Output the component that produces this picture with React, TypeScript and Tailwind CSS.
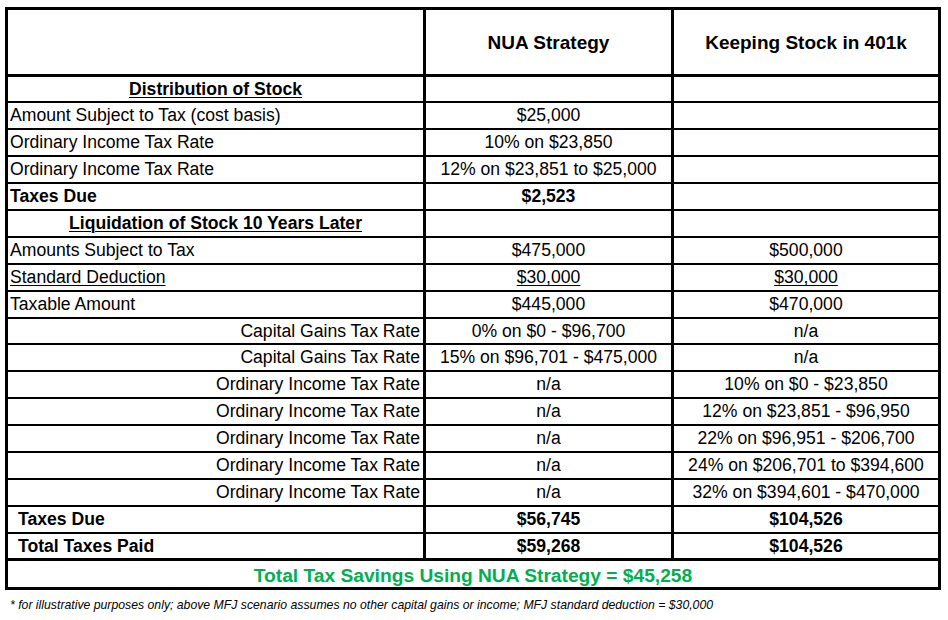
import React from "react";

type Row = {
  label: string;
  align: "l" | "r" | "c" | "l2";
  bold?: boolean;
  under?: boolean;
  v1?: string;
  v2?: string;
  vb?: boolean;
  vu?: boolean;
  short?: boolean;
  thick?: boolean;
};

const rows: Row[] = [
  { label: "Distribution of Stock", align: "c", bold: true, under: true, short: true },
  { label: "Amount Subject to Tax (cost basis)", align: "l", v1: "$25,000" },
  { label: "Ordinary Income Tax Rate", align: "l", v1: "10% on $23,850" },
  { label: "Ordinary Income Tax Rate", align: "l", v1: "12% on $23,851 to $25,000" },
  { label: "Taxes Due", align: "l", bold: true, v1: "$2,523", vb: true },
  { label: "Liquidation of Stock 10 Years Later", align: "c", bold: true, under: true },
  { label: "Amounts Subject to Tax", align: "l", v1: "$475,000", v2: "$500,000" },
  { label: "Standard Deduction", align: "l", under: true, v1: "$30,000", v2: "$30,000", vu: true },
  { label: "Taxable Amount", align: "l", v1: "$445,000", v2: "$470,000" },
  { label: "Capital Gains Tax Rate", align: "r", v1: "0% on $0 - $96,700", v2: "n/a", short: true },
  { label: "Capital Gains Tax Rate", align: "r", v1: "15% on $96,701 - $475,000", v2: "n/a" },
  { label: "Ordinary Income Tax Rate", align: "r", v1: "n/a", v2: "10% on $0 - $23,850" },
  { label: "Ordinary Income Tax Rate", align: "r", v1: "n/a", v2: "12% on $23,851 - $96,950" },
  { label: "Ordinary Income Tax Rate", align: "r", v1: "n/a", v2: "22% on $96,951 - $206,700" },
  { label: "Ordinary Income Tax Rate", align: "r", v1: "n/a", v2: "24% on $206,701 to $394,600" },
  { label: "Ordinary Income Tax Rate", align: "r", v1: "n/a", v2: "32% on $394,601 - $470,000" },
  { label: "Taxes Due", align: "l2", bold: true, v1: "$56,745", v2: "$104,526", vb: true },
  { label: "Total Taxes Paid", align: "l2", bold: true, v1: "$59,268", v2: "$104,526", vb: true, thick: true },
];

function TableRow({ r }: { r: Row }) {
  const rowCls = [
    "flex border-black",
    r.short ? "h-[26px]" : "h-[27px]",
    r.thick ? "border-b-[3px]" : "border-b-2",
  ].join(" ");
  const labelAlign =
    r.align === "c"
      ? "justify-center"
      : r.align === "r"
      ? "justify-end pr-[3px]"
      : r.align === "l2"
      ? "justify-start pl-[10px]"
      : "justify-start pl-[2px]";
  return (
    <div className={rowCls}>
      <div
        className={`flex w-[418px] shrink-0 items-center border-r-[3px] border-black pt-[1px] ${labelAlign} ${
          r.bold ? "font-bold" : ""
        }`}
      >
        <span className={r.under ? "underline decoration-1 underline-offset-[2px]" : ""}>{r.label}</span>
      </div>
      <div
        className={`flex w-[248px] shrink-0 items-center justify-center border-r-[3px] border-black pt-[1px] ${
          r.vb ? "font-bold" : ""
        }`}
      >
        <span className={r.vu ? "underline decoration-1 underline-offset-[2px]" : ""}>{r.v1 ?? ""}</span>
      </div>
      <div className={`flex flex-1 items-center justify-center pt-[1px] ${r.vb ? "font-bold" : ""}`}>
        <span className={r.vu ? "underline decoration-1 underline-offset-[2px]" : ""}>{r.v2 ?? ""}</span>
      </div>
    </div>
  );
}

export default function App() {
  return (
    <div className="h-[620px] w-[948px] bg-white pl-[5px] pt-[7px] font-['Liberation_Sans',Arial,sans-serif] text-black">
      <div className="box-border w-[936px] border-[3px] border-black text-[17.6px] leading-none">
        <div className="flex h-[67px] border-b-[3px] border-black">
          <div className="w-[418px] shrink-0 border-r-[3px] border-black" />
          <div className="flex w-[248px] shrink-0 items-center justify-center border-r-[3px] border-black text-[19px] font-bold">
            NUA Strategy
          </div>
          <div className="flex flex-1 items-center justify-center text-[19px] font-bold">Keeping Stock in 401k</div>
        </div>
        {rows.map((r, i) => (
          <TableRow key={i} r={r} />
        ))}
        <div className="flex h-[26px] items-center justify-center pt-[3px] text-[19.2px] font-bold text-[#00b050]">
          Total Tax Savings Using NUA Strategy = $45,258
        </div>
      </div>
      <div className="mt-[8px] pl-[5px] text-[12.25px] italic leading-[14px]">
        * for illustrative purposes only; above MFJ scenario assumes no other capital gains or income; MFJ standard
        deduction = $30,000
      </div>
    </div>
  );
}
